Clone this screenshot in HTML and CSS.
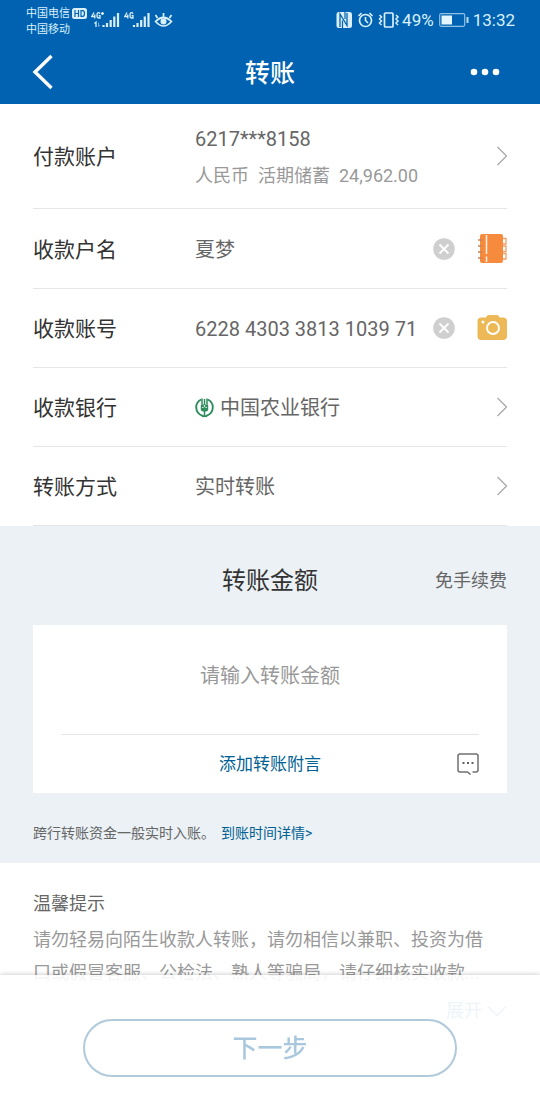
FILE: index.html
```html
<!DOCTYPE html>
<html lang="zh-CN">
<head>
<meta charset="utf-8">
<meta name="viewport" content="width=device-width, initial-scale=1">
<title>转账</title>
<link rel="stylesheet" href="styles.css">
</head>
<body>
<header class="header">
  <div class="status">
    <div class="carriers">
      <div class="carrier">中国电信
        <svg width="15" height="11" viewBox="0 0 15 11"><rect width="15" height="11" rx="2.500" fill="#d9f0fb"/><path d="M3 2v7M6.500 2v7M3 5.500h3.500M9 2.600v5.800h1.500q2 0 2-2.900t-2-2.900z" fill="none" stroke="#0062b1" stroke-width="1.200"/></svg>
      </div>
      <div class="carrier">中国移动</div>
    </div>
    <svg class="signals" width="84" height="18" viewBox="0 0 84 18" fill="none" stroke="#d9f0fb">
      <path d="M3 1.500L.8 5.500H4.500M3.800 3.500v4M9 2.700Q8.500 1.700 7.500 1.700 6 1.700 6 4.300t1.500 2.700H9V4.600H7.600M10 2.500h3M11.500 1v3" stroke-width="1.300"/>
      <path d="M3.500 12.500l1.500-1.300V16" stroke-width="1.300"/><path d="M7.500 11.500v4l1.500-1.500" stroke-width="1" opacity=".5"/>
      <path d="M12.500 14v2M16 12v4M19.700 9v7M23.300 5.500V16M27 2v14" stroke-width="2.200"/>
      <path d="M36 1.500l-2.200 4h3.700M36.800 3.500v4M42 2.700q-.5-1-1.500-1Q39 1.700 39 4.300t1.500 2.700H42V4.600h-1.400" stroke-width="1.300"/>
      <path d="M43 14v2M46.500 12v4M50.200 9v7M53.800 5.500V16M57.500 2v14" stroke-width="2.200"/>
      <path d="M64.500 10.500q8-8 16 0-8 9-16 0zM72.500 5.500V2M66.500 7L64.500 4M78.500 7l2-3" stroke-width="1.700"/><circle cx="72.500" cy="10.500" r="3" fill="#d9f0fb" stroke="none"/>
    </svg>
    <div class="status-right">
      <svg width="65" height="18" viewBox="0 0 65 18" fill="none" stroke="#d9f0fb">
        <rect x="1.500" y="1" width="15.500" height="16" rx="2.500" fill="#d9f0fb" stroke="none"/>
        <path d="M5 16V3l7 11.500V2" stroke="#0062b1" stroke-width="1.300"/><path d="M7.500 17V9.500M10 1v7" stroke="#0062b1" stroke-width="1.200"/>
        <circle cx="30.500" cy="9.500" r="6" stroke-width="1.700"/><path d="M30.500 6v3.500l2.500 2.500M23.500 5L26.500 2.200M37.500 5l-3-2.800" stroke-width="1.600"/>
        <rect x="49.500" y="2" width="8.500" height="14" rx="1" stroke-width="1.700"/>
        <path d="M44.500 4l2 2-2 2 2 2-2 2 2 2M61 4l2 2-2 2 2 2-2 2 2 2" stroke-width="1.500"/>
      </svg>
      <span class="percent">49%</span>
      <svg class="battery" width="30" height="14" viewBox="0 0 30 14" fill="none"><rect x=".7" y=".7" width="25" height="12.600" rx="1.500" stroke="#8fc1e6" stroke-width="1.200"/><path d="M2.500 2.500H13v9H2.500z" fill="#e4f5ff"/><path d="M28.500 4v6" stroke="#b8def5" stroke-width="2"/></svg>
      <span>13:32</span>
    </div>
  </div>
  <nav class="navbar">
    <button class="icon-button" aria-label="返回"><svg width="24" height="38" viewBox="0 0 24 38"><path d="M19.500 3L3 19l16.500 16" fill="none" stroke="#fff" stroke-width="3.400"/></svg></button>
    <h1 class="title">转账</h1>
    <button class="icon-button more" aria-label="更多"><svg width="30" height="8" viewBox="0 0 30 8" fill="#fff"><circle cx="4" cy="4" r="3.300"/><circle cx="15" cy="4" r="3.300"/><circle cx="26" cy="4" r="3.300"/></svg></button>
  </nav>
</header>

<main>
  <form class="form">
    <div class="row row-tall">
      <span class="label">付款账户</span>
      <div class="value account">
        <span>6217***8158</span>
        <span class="account-detail"><span>人民币</span><span>活期储蓄</span><span>24,962.00</span></span>
      </div>
      <button type="button" class="icon-button" aria-label="选择付款账户"><svg width="12" height="20" viewBox="0 0 12 20"><path d="M2.500 1l9 9-9 9" fill="none" stroke="#aaa" stroke-width="1.300"/></svg></button>
    </div>
    <div class="row">
      <label class="label" for="payee">收款户名</label>
      <input class="value" id="payee" type="text" value="夏梦">
      <button type="button" class="icon-button clear" aria-label="清除户名"><svg width="22" height="22" viewBox="0 0 22 22"><circle cx="11" cy="11" r="10.800" fill="#cfcfcf"/><path d="M6.500 6.500l9 9M15.500 6.500l-9 9" stroke="#fff" stroke-width="1.800"/></svg></button>
      <button type="button" class="icon-button" aria-label="通讯录"><svg width="30" height="30" viewBox="0 0 30 30"><g fill="none" stroke="#f0a06a" stroke-width="1.300"><path d="M25 4.500h4v5.500h-4M25 12h4v5.500h-4M25 19.500h4V25h-4"/></g><rect x="3" y="0" width="23" height="29" rx="2" fill="#f78b3d"/><path d="M1 6h4.500M1 12h4.500M1 18h4.500M1 24h4.500" stroke="#c98258" stroke-width="1.300"/><path d="M9.500 1v19M9.500 22.500V28" stroke="#fff1e5" stroke-width="1.500"/></svg></button>
    </div>
    <div class="row">
      <label class="label" for="number">收款账号</label>
      <input class="value" id="number" type="text" value="6228 4303 3813 1039 71">
      <button type="button" class="icon-button clear" aria-label="清除账号"><svg width="22" height="22" viewBox="0 0 22 22"><circle cx="11" cy="11" r="10.800" fill="#cfcfcf"/><path d="M6.500 6.500l9 9M15.500 6.500l-9 9" stroke="#fff" stroke-width="1.800"/></svg></button>
      <button type="button" class="icon-button" aria-label="拍照识别"><svg width="30" height="30" viewBox="0 0 30 30"><path d="M4.500 4.500H9q.5-2.500 2.500-2.500h8.500q2 0 2.500 2.500H26q4 0 4 4V23q0 4-4 4H4.500q-4 0-4-4V8.500q0-4 4-4z" fill="#edb957"/><circle cx="16" cy="15" r="6" fill="none" stroke="#fff" stroke-width="1.900"/><circle cx="6" cy="9" r="1.500" fill="#fff"/></svg></button>
    </div>
    <div class="row">
      <span class="label">收款银行</span>
      <div class="value bank">
        <svg width="20" height="20" viewBox="0 0 20 20" fill="none" stroke="#2f8c5c"><path d="M6.300 1.500Q1 4 1.200 9.500 1.500 16 8 18M12.700 1.500Q18 4 17.800 9.500 17.500 16 11 18" stroke-width="1.900"/><path d="M9.500 1v17.500M7 .5v6M12 .5v6" stroke-width="1.500"/><path d="M5.800 6.500h7.400v5q0 2-3.700 2t-3.700-2z" fill="#2f8c5c" stroke="none"/><path d="M7 9.500h1.600M10.400 9.500H12M9.500 7v2" stroke="#d5eadf" stroke-width="1.200"/><path d="M7 18.200h5" stroke-width="1.800"/></svg>
        <span>中国农业银行</span>
      </div>
      <button type="button" class="icon-button" aria-label="选择银行"><svg width="12" height="20" viewBox="0 0 12 20"><path d="M2.500 1l9 9-9 9" fill="none" stroke="#aaa" stroke-width="1.300"/></svg></button>
    </div>
    <div class="row">
      <span class="label">转账方式</span>
      <span class="value">实时转账</span>
      <button type="button" class="icon-button" aria-label="选择转账方式"><svg width="12" height="20" viewBox="0 0 12 20"><path d="M2.500 1l9 9-9 9" fill="none" stroke="#aaa" stroke-width="1.300"/></svg></button>
    </div>
  </form>

  <section class="amount">
    <div class="amount-head">
      <label class="amount-title" for="amount">转账金额</label>
      <span class="fee">免手续费</span>
    </div>
    <div class="card">
      <input class="amount-input" id="amount" type="text" placeholder="请输入转账金额">
      <div class="remark">
        <button type="button" class="remark-button">添加转账附言</button>
        <button type="button" class="icon-button remark-icon" aria-label="常用附言"><svg width="22" height="22" viewBox="0 0 22 22"><path d="M15.500 19H19q2 0 2-2V3q0-2-2-2H3Q1 1 1 3v14q0 2 2 2h7.500l3 2.500" fill="none" stroke="#707070" stroke-width="1.500"/><path d="M5.500 10h2M10 10h2M14.500 10h2" stroke="#606060" stroke-width="2"/></svg></button>
      </div>
    </div>
    <p class="note">跨行转账资金一般实时入账。<a class="link" href="#">到账时间详情&gt;</a></p>
  </section>

  <section class="tips">
    <h2 class="tips-title">温馨提示</h2>
    <p class="tips-text">请勿轻易向陌生收款人转账，请勿相信以兼职、投资为借口或假冒客服、公检法、熟人等骗局，请仔细核实收款...</p>
    <button type="button" class="expand">展开<svg width="20" height="12" viewBox="0 0 20 12"><path d="M1 1.500l9 9 9-9" fill="none" stroke="#418db2" stroke-width="1.300"/></svg></button>
  </section>
</main>

<footer class="footer"><button type="submit" class="next">下一步</button></footer>
</body>
</html>
```
FILE: styles.css
```css
* {
  box-sizing: border-box;
}

body {
  margin: 0;
  background: #fff;
  color: #666;
  font-family: Roboto, "Noto Sans CJK SC", sans-serif;
  font-size: 20px;
  line-height: 28px;
}

button,
input {
  border: 0;
  padding: 0;
  background: none;
  color: inherit;
  font: inherit;
}

svg {
  display: block;
}

h1,
h2,
p {
  margin: 0;
}

.header {
  background: #0062b1;
  color: #fff;
}

.status {
  display: flex;
  align-items: center;
  height: 40px;
  padding: 0 25px 0 26px;
  color: #d9f0fb;
}

.carriers {
  padding-top: 3px;
  font-size: 11px;
  line-height: 16px;
}

.carrier {
  display: flex;
  align-items: center;
  gap: 2px;
}

.signals {
  margin-left: 4px;
}

.status-right {
  display: flex;
  align-items: center;
  margin-left: auto;
  font-size: 17px;
}

.percent {
  margin-left: 2px;
}

.battery {
  margin: 0 4px 0 5px;
}

.navbar {
  display: grid;
  grid-template-columns: 1fr auto 1fr;
  align-items: center;
  height: 64px;
  padding: 0 32px;
}

.icon-button {
  display: flex;
  flex: none;
  justify-self: start;
  cursor: pointer;
}

.more {
  justify-self: end;
  padding-right: 8px;
}

.title {
  padding-top: 4px;
  font-size: 25px;
  font-weight: 500;
}

.form {
  padding: 0 33px;
}

.row {
  display: flex;
  align-items: center;
  height: 80px;
  border-bottom: 1px solid #e6e6e6;
}

.row-tall {
  height: 105px;
}

.row:nth-child(n + 3) {
  height: 79px;
}

.label {
  flex: none;
  width: 162px;
  padding-top: 2px;
  color: #333;
  font-size: 21px;
}

.value {
  flex: 1;
  min-width: 0;
  padding-top: 2px;
}

.clear {
  margin: 0 22px 0 14px;
}

.account {
  display: flex;
  flex-direction: column;
  gap: 9px;
}

.account-detail {
  display: flex;
  gap: 9px;
  color: #999;
  font-size: 18px;
}

.bank {
  display: flex;
  align-items: center;
  gap: 5px;
}

.amount {
  padding: 0 33px 16px;
  background: #ebf1f5;
}

.amount-head {
  display: grid;
  grid-template-columns: 1fr auto 1fr;
  align-items: center;
  height: 99px;
  padding-top: 10px;
}

.amount-title {
  grid-column: 2;
  color: #333;
  font-size: 24px;
}

.fee {
  justify-self: end;
  font-size: 18px;
}

.card {
  padding: 0 28px;
  background: #fff;
}

.amount-input {
  width: 100%;
  height: 110px;
  padding-bottom: 8px;
  border-bottom: 1px solid #e6e6e6;
  text-align: center;
}

.amount-input::placeholder {
  color: #999;
  opacity: 1;
}

.remark {
  display: grid;
  grid-template-columns: 1fr auto 1fr;
  align-items: center;
  height: 58px;
}

.remark-button {
  grid-column: 2;
  color: #005f93;
  font-size: 17px;
}

.remark-icon {
  justify-self: end;
}

.note {
  padding-top: 26px;
  font-size: 14px;
}

.link {
  margin-left: 6px;
  color: #005f93;
  text-decoration: none;
}

.tips {
  padding: 27px 33px 96px;
}

.tips-title {
  font-size: 18px;
  font-weight: 400;
}

.tips-text {
  padding: 5px 12px 0 0;
  color: #999;
  font-size: 18px;
  line-height: 33px;
}

.expand {
  display: flex;
  align-items: center;
  gap: 5px;
  margin: 8px 0 0 auto;
  color: #418db2;
  font-size: 18px;
}

.footer {
  position: fixed;
  right: 0;
  bottom: 0;
  left: 0;
  display: flex;
  justify-content: center;
  padding: 44px 83px 43px;
  background: rgba(255, 255, 255, 0.9);
  box-shadow: 0 0 5px rgba(0, 0, 0, 0.25);
}

.next {
  flex: 1;
  height: 58px;
  padding-top: 2px;
  border: 2px solid #b0cadb;
  border-radius: 29px;
  color: #a9c8de;
  font-size: 25px;
  font-weight: 500;
}
```
